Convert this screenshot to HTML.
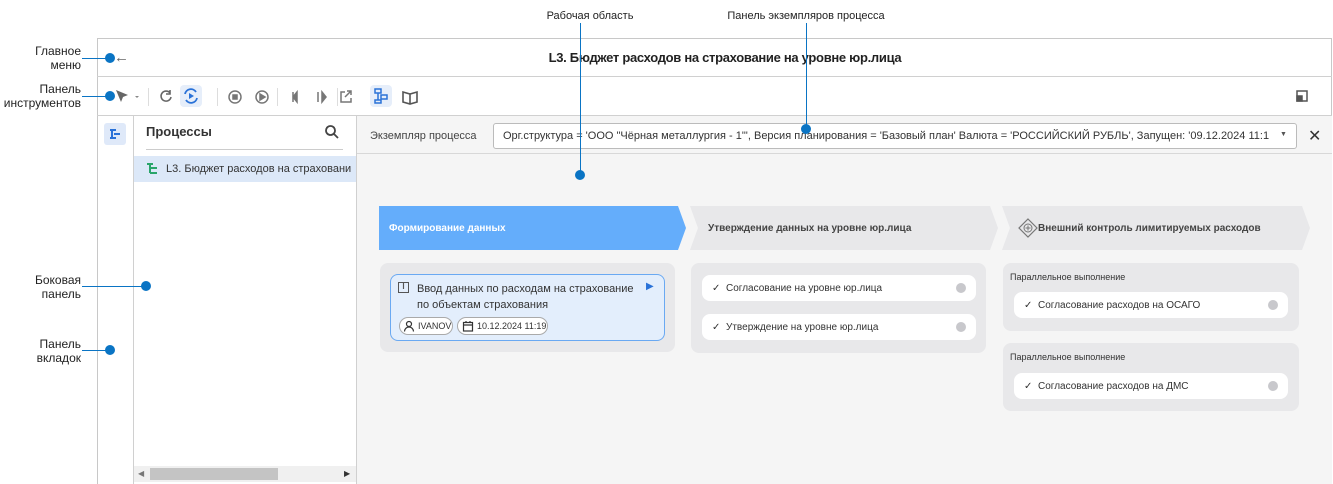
<!DOCTYPE html>
<html><head><meta charset="utf-8"><style>
*{box-sizing:border-box;margin:0;padding:0}
body{width:1333px;height:484px;background:#fff;font-family:"Liberation Sans",sans-serif;position:relative;overflow:hidden;color:#333}
.a{position:absolute}
.lbl{font-size:12px;color:#222;text-align:right;line-height:14px}
.dot{position:absolute;width:10px;height:10px;border-radius:50%;background:#0a74c4}
.hl{position:absolute;height:1px;background:#0a74c4}
.vl{position:absolute;width:1px;background:#0a74c4}
.ic{position:absolute;color:#666;font-size:14px}
.sep{position:absolute;top:88px;width:1px;height:18px;background:#ddd}
.stage{position:absolute;top:206px;height:44px;font-size:10px;font-weight:bold;display:flex;align-items:center}
.col{position:absolute;background:#e8e8ea;border-radius:8px}
.item{position:absolute;background:#fff;border-radius:8px;height:26px;font-size:10px;color:#333;display:flex;align-items:center;padding-left:10px}
.item .c{width:14px;font-size:10px}
.item .g{position:absolute;right:10px;top:8px;width:10px;height:10px;border-radius:50%;background:#c8c8cc}
.par{position:absolute;font-size:9px;color:#333}
</style></head><body>
<div class="a" style="left:97px;top:38px;width:1235px;height:446px;border:1px solid #c8c8c8;border-bottom:none"></div>
<div class="a" style="left:97px;top:76px;width:1235px;height:1px;background:#d0d0d0"></div>
<div class="a" style="left:97px;top:115px;width:1235px;height:1px;background:#d0d0d0"></div>
<div class="a" style="left:530px;top:50px;width:390px;text-align:center;font-size:13px;font-weight:bold;color:#222;white-space:nowrap;letter-spacing:-0.3px">L3. Бюджет расходов на страхование на уровне юр.лица</div>
<div class="ic" style="left:114px;top:49px;font-size:15px">&#8592;</div>
<svg class="a" style="left:112px;top:87px" width="220" height="20" viewBox="0 0 220 20" fill="none" stroke="#666" stroke-width="1.6">
<path d="M4 3l12 5-5 2-2 5z" fill="#666" stroke="none"/>
<path d="M23 9l2 2 2-2z" fill="#888" stroke="none"/>
<path d="M58 6a5 5 0 1 0 1 4M58 3v4h-4"/>
</svg>
<div class="a" style="left:180px;top:85px;width:22px;height:22px;background:#e6eefa;border-radius:4px"></div>
<svg class="a" style="left:180px;top:85px" width="22" height="22" fill="none" stroke="#2a72d8" stroke-width="1.8"><path d="M5 9a6 6 0 0 1 11-2M17 13a6 6 0 0 1-11 2"/><path d="M9 8l5 3-5 3z" fill="#2a72d8" stroke="none"/></svg>
<div class="sep" style="left:148px"></div><div class="sep" style="left:217px"></div><div class="sep" style="left:277px"></div><div class="sep" style="left:337px"></div>
<svg class="a" style="left:225px;top:87px" width="140" height="20" fill="none" stroke="#777" stroke-width="1.5">
<circle cx="10" cy="10" r="6"/><rect x="8" y="8" width="4" height="4" fill="#777"/>
<circle cx="37" cy="10" r="6"/><path d="M35 7l5 3-5 3z" fill="#777"/>
<path d="M68 5v10M72 5l-4 5 4 5z" fill="#777"/>
<path d="M93 5v10M97 5l4 5-4 5z" fill="#777"/>
<path d="M120 5h-4v10h10v-4M122 4h4v4M126 4l-6 6"/>
</svg>
<div class="a" style="left:370px;top:85px;width:22px;height:22px;background:#e6eefa;border-radius:4px"></div>
<svg class="a" style="left:370px;top:85px" width="22" height="22" fill="none" stroke="#2a72d8" stroke-width="1.5"><rect x="5" y="4" width="6" height="4"/><rect x="11" y="10" width="6" height="4"/><rect x="5" y="15" width="6" height="3"/><path d="M8 8v7"/></svg>
<svg class="a" style="left:400px;top:87px" width="20" height="20" fill="none" stroke="#555" stroke-width="1.6"><path d="M3 5l7 2 7-2v10l-7 2-7-2zM10 7v10"/></svg>
<svg class="a" style="left:1294px;top:88px" width="16" height="16" fill="none" stroke="#555" stroke-width="1.5"><rect x="3" y="3" width="10" height="10"/><rect x="3" y="8" width="5" height="5" fill="#555"/></svg>
<div class="a" style="left:133px;top:116px;width:1px;height:368px;background:#d0d0d0"></div>
<div class="a" style="left:104px;top:123px;width:22px;height:22px;background:#dfe9f9;border-radius:3px"></div>
<svg class="a" style="left:104px;top:123px" width="22" height="22" fill="none" stroke="#2a72d8" stroke-width="2"><path d="M6 7h6M10 11h6M6 15h6M8 7v8"/></svg>
<div class="a" style="left:146px;top:124px;font-size:13px;font-weight:bold;color:#333">Процессы</div>
<svg class="a" style="left:324px;top:124px" width="16" height="16" fill="none" stroke="#444" stroke-width="1.8"><circle cx="6.5" cy="6.5" r="4.5"/><path d="M10 10l4 4"/></svg>
<div class="a" style="left:146px;top:149px;width:197px;height:1px;background:#ccc"></div>
<div class="a" style="left:134px;top:156px;width:222px;height:26px;background:#dce8f8"></div>
<svg class="a" style="left:145px;top:161px" width="16" height="16" fill="none" stroke="#2aa56a" stroke-width="2"><path d="M2 3h6M5 3v9M5 7h7M5 12h7"/></svg>
<div class="a" style="left:166px;top:163px;font-size:11px;color:#333;white-space:nowrap;width:190px;overflow:hidden">L3. Бюджет расходов на страховани</div>
<div class="a" style="left:134px;top:466px;width:222px;height:16px;background:#f0f0f0"></div>
<div class="a" style="left:150px;top:468px;width:128px;height:12px;background:#c4c4c4"></div>
<div class="a" style="left:138px;top:469px;font-size:8px;color:#777">&#9664;</div>
<div class="a" style="left:344px;top:469px;font-size:8px;color:#333">&#9654;</div>
<div class="a" style="left:356px;top:116px;width:1px;height:368px;background:#d0d0d0"></div>
<div class="a" style="left:357px;top:116px;width:975px;height:368px;background:#f5f5f5"></div>
<div class="a" style="left:357px;top:153px;width:975px;height:1px;background:#d8d8d8"></div>
<div class="a" style="left:370px;top:130px;font-size:11px;color:#444">Экземпляр процесса</div>
<div class="a" style="left:493px;top:123px;width:804px;height:26px;background:#fff;border:1px solid #bbb;border-radius:3px;font-size:11px;color:#333;padding:6px 0 0 9px;white-space:nowrap;overflow:hidden">Орг.структура = 'ООО "Чёрная металлургия - 1"', Версия планирования = 'Базовый план' Валюта = 'РОССИЙСКИЙ РУБЛЬ', Запущен: '09.12.2024 11:1</div>
<div class="a" style="left:1280px;top:131px;font-size:7px;color:#555">&#9660;</div>
<div class="a" style="left:1308px;top:126px;font-size:16px;color:#333">&#10005;</div>
<svg class="a" style="left:379px;top:206px" width="935" height="44">
<path d="M0 0h299l8 22-8 22H0z" fill="#64adfb"/>
<path d="M311 0h300l8 22-8 22H311l8-22z" fill="#e8e8ea"/>
<path d="M623 0h300l8 22-8 22H623l8-22z" fill="#e8e8ea"/>
<path d="M649 13l9 9-9 9-9-9z" fill="none" stroke="#777" stroke-width="1.2"/><circle cx="649" cy="22" r="4" fill="none" stroke="#777"/><path d="M649 19.5v5M646.5 22h5" stroke="#777"/>
</svg>
<div class="stage" style="left:389px;color:#fff">Формирование данных</div>
<div class="stage" style="left:708px;color:#444">Утверждение данных на уровне юр.лица</div>
<div class="stage" style="left:1038px;color:#444">Внешний контроль лимитируемых расходов</div>
<div class="col" style="left:380px;top:263px;width:295px;height:89px"></div>
<div class="a" style="left:390px;top:274px;width:275px;height:67px;background:#e3eefc;border:1.5px solid #6aa9f2;border-radius:8px"></div>
<div class="a" style="left:398px;top:282px;width:11px;height:11px;border:1.5px solid #555;font-size:8px;line-height:8px;text-align:center;font-weight:bold;color:#555">I</div>
<div class="a" style="left:417px;top:281px;font-size:11px;line-height:16px;color:#333;width:230px">Ввод данных по расходам на страхование по объектам страхования</div>
<div class="a" style="left:646px;top:281px;font-size:10px;color:#2a72d8">&#9654;</div>
<div class="a" style="left:399px;top:317px;width:54px;height:18px;border:1px solid #aaa;border-radius:9px;background:#fff;font-size:9px;padding:3px 0 0 18px;color:#333">IVANOV</div>
<svg class="a" style="left:403px;top:320px" width="12" height="12" fill="none" stroke="#333" stroke-width="1.2"><circle cx="6" cy="4" r="2.5"/><path d="M1.5 11.5a4.5 4.5 0 0 1 9 0"/></svg>
<div class="a" style="left:457px;top:317px;width:91px;height:18px;border:1px solid #aaa;border-radius:9px;background:#fff;font-size:9px;padding:3px 0 0 19px;color:#333">10.12.2024 11:19</div>
<svg class="a" style="left:462px;top:320px" width="12" height="12" fill="none" stroke="#333" stroke-width="1.2"><rect x="1.5" y="2.5" width="9" height="8.5"/><path d="M1.5 5h9M4 1v2M8 1v2"/></svg>
<div class="col" style="left:691px;top:263px;width:295px;height:90px"></div>
<div class="item" style="left:702px;top:275px;width:274px"><span class="c">&#10003;</span>Согласование на уровне юр.лица<span class="g"></span></div>
<div class="item" style="left:702px;top:314px;width:274px"><span class="c">&#10003;</span>Утверждение на уровне юр.лица<span class="g"></span></div>
<div class="col" style="left:1003px;top:263px;width:296px;height:68px"></div>
<div class="par" style="left:1010px;top:272px">Параллельное выполнение</div>
<div class="item" style="left:1014px;top:292px;width:274px"><span class="c">&#10003;</span>Согласование расходов на ОСАГО<span class="g"></span></div>
<div class="col" style="left:1003px;top:343px;width:296px;height:68px"></div>
<div class="par" style="left:1010px;top:352px">Параллельное выполнение</div>
<div class="item" style="left:1014px;top:373px;width:274px"><span class="c">&#10003;</span>Согласование расходов на ДМС<span class="g"></span></div>
<div class="a lbl" style="left:0;top:44px;width:81px">Главное<br>меню</div>
<div class="hl" style="left:82px;top:58px;width:28px"></div><div class="dot" style="left:105px;top:53px"></div>
<div class="a lbl" style="left:0;top:82px;width:81px">Панель<br>инструментов</div>
<div class="hl" style="left:82px;top:96px;width:28px"></div><div class="dot" style="left:105px;top:91px"></div>
<div class="a lbl" style="left:0;top:273px;width:81px">Боковая<br>панель</div>
<div class="hl" style="left:82px;top:286px;width:64px"></div><div class="dot" style="left:141px;top:281px"></div>
<div class="a lbl" style="left:0;top:337px;width:81px">Панель<br>вкладок</div>
<div class="hl" style="left:82px;top:350px;width:28px"></div><div class="dot" style="left:105px;top:345px"></div>
<div class="a lbl" style="left:530px;top:9px;width:120px;text-align:center;font-size:11px">Рабочая область</div>
<div class="vl" style="left:580px;top:23px;height:152px"></div><div class="dot" style="left:575px;top:170px"></div>
<div class="a lbl" style="left:706px;top:9px;width:200px;text-align:center;font-size:11px">Панель экземпляров процесса</div>
<div class="vl" style="left:806px;top:23px;height:106px"></div><div class="dot" style="left:801px;top:124px"></div>
</body></html>
